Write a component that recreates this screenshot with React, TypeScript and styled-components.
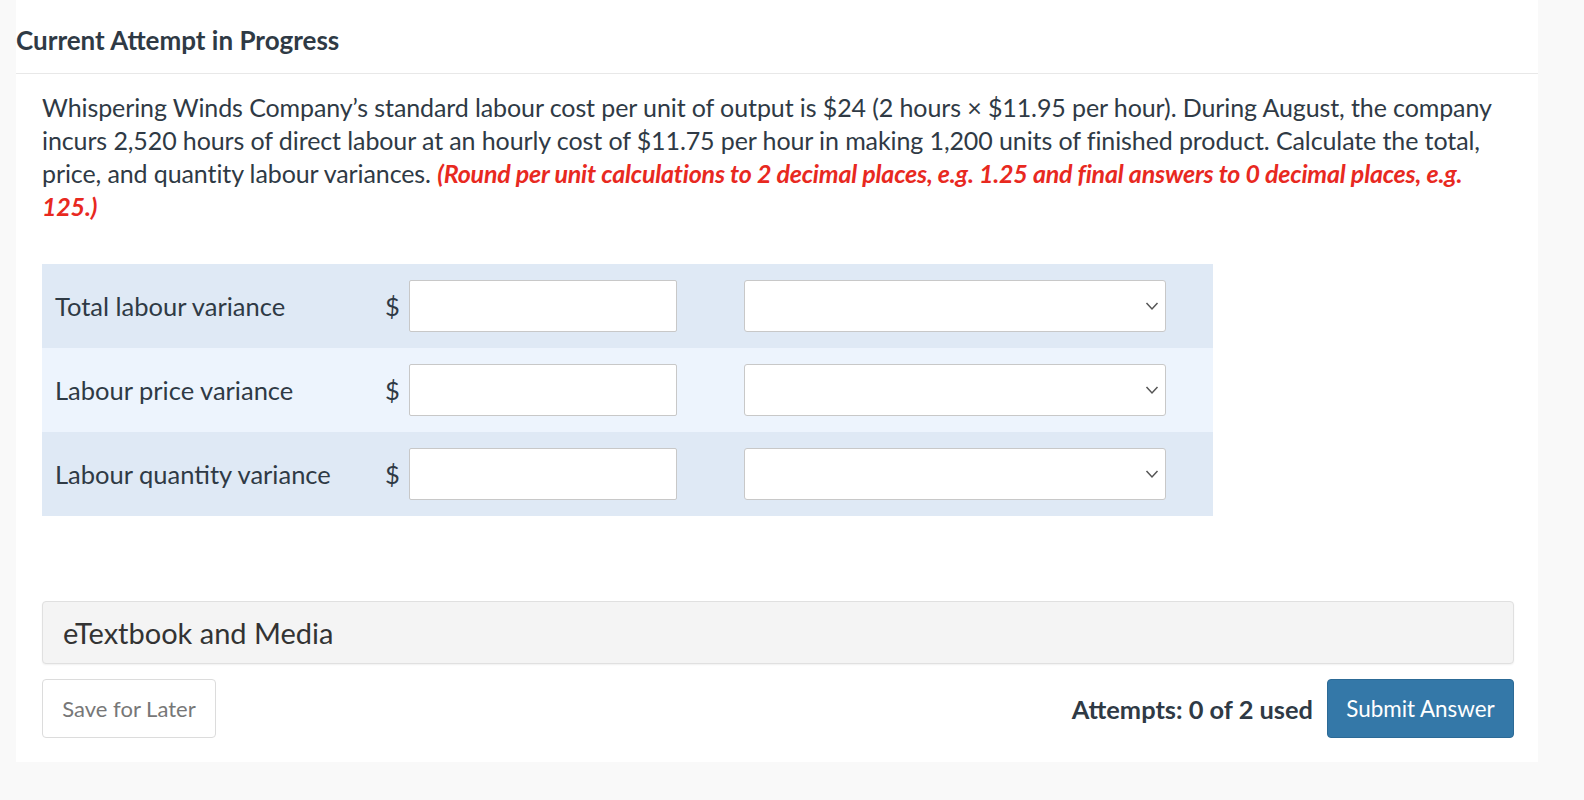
import React from 'react';
import styled, { createGlobalStyle } from 'styled-components';

const GlobalStyle = createGlobalStyle`
  html, body {
    margin: 0;
    padding: 0;
    background: #f9f9f9;
    font-family: Lato, "Open Sans", sans-serif;
  }
`;

const Page = styled.div`
  width: 1584px;
  height: 800px;
  background: #f9f9f9;
  padding-left: 16px;
  box-sizing: border-box;
`;

const Card = styled.div`
  width: 1522px;
  height: 762px;
  background: #fff;
  box-sizing: border-box;
`;

const Heading = styled.h2`
  margin: 0;
  height: 74px;
  display: flex;
  align-items: center;
  padding-top: 6px;
  box-sizing: border-box;
  font-size: 26px;
  font-weight: 700;
  color: #2f3a45;
  border-bottom: 1px solid #e8e8e8;
`;

const Body = styled.div`
  padding: 17px 24px 0 26px;
`;

const Question = styled.p`
  margin: 0;
  font-size: 25px;
  letter-spacing: -0.1px;
  line-height: 33px;
  color: #2f3a45;
`;

const Hint = styled.span`
  color: #e8291f;
  font-weight: 700;
  font-style: italic;
  letter-spacing: -0.2px;
`;

const Table = styled.div`
  margin-top: 41px;
  width: 1171px;
`;

const Row = styled.div<{ $alt?: boolean }>`
  height: 84px;
  display: flex;
  align-items: center;
  background: ${(p) => (p.$alt ? '#edf4fd' : '#dfe9f5')};
`;

const Label = styled.div`
  width: 330px;
  padding-left: 13px;
  font-size: 25.5px;
  color: #2f3a45;
`;

const Dollar = styled.span`
  width: 24px;
  font-size: 25.5px;
  color: #2f3a45;
`;

const TextInput = styled.input`
  width: 268px;
  height: 52px;
  box-sizing: border-box;
  border: 1px solid #c8c8c8;
  border-radius: 2px;
  background: #fff;
  outline: none;
  font-family: inherit;
  font-size: 22px;
`;

const SelectBox = styled.div`
  margin-left: 67px;
  width: 422px;
  height: 52px;
  box-sizing: border-box;
  border: 1px solid #c8c8c8;
  border-radius: 3px;
  background: #fff;
  display: flex;
  align-items: center;
  justify-content: flex-end;
  padding-right: 6px;
`;

const MediaBar = styled.div`
  margin-top: 85px;
  height: 63px;
  box-sizing: border-box;
  background: #f4f4f4;
  border: 1px solid #e0e0e0;
  border-radius: 4px;
  box-shadow: 0 1px 2px rgba(0, 0, 0, 0.06);
  display: flex;
  align-items: center;
  padding-left: 20px;
  font-size: 29px;
  color: #333;
`;

const Footer = styled.div`
  margin-top: 15px;
  display: flex;
  align-items: center;
`;

const SaveButton = styled.button`
  width: 174px;
  height: 59px;
  background: #fff;
  border: 1px solid #dcdcdc;
  border-radius: 4px;
  font-family: inherit;
  font-size: 22px;
  color: #777;
`;

const Attempts = styled.span`
  margin-left: auto;
  margin-right: 14px;
  font-size: 25.4px;
  font-weight: 700;
  color: #2f3a45;
`;

const SubmitButton = styled.button`
  width: 187px;
  height: 59px;
  background: #3478a8;
  border: 1px solid #2c6a96;
  border-radius: 4px;
  font-family: inherit;
  font-size: 22.4px;
  color: #fff;
`;

const Chevron = () => (
  <svg width="14" height="10" viewBox="0 0 14 10">
    <path d="M1.5 2 L7 8 L12.5 2" fill="none" stroke="#555" strokeWidth="1.5" />
  </svg>
);

const rows = ['Total labour variance', 'Labour price variance', 'Labour quantity variance'];

export default function App() {
  return (
    <Page>
      <GlobalStyle />
      <Card>
        <Heading>Current Attempt in Progress</Heading>
        <Body>
          <Question>
            Whispering Winds Company’s standard labour cost per unit of output is $24 (2 hours × $11.95 per hour).
            During August, the company incurs 2,520 hours of direct labour at an hourly cost of $11.75 per hour in
            making 1,200 units of finished product. Calculate the total, price, and quantity labour variances.{' '}
            <Hint>
              (Round per unit calculations to 2 decimal places, e.g. 1.25 and final answers to 0 decimal places, e.g.
              125.)
            </Hint>
          </Question>
          <Table>
            {rows.map((r, i) => (
              <Row key={r} $alt={i === 1}>
                <Label>{r}</Label>
                <Dollar>$</Dollar>
                <TextInput />
                <SelectBox>
                  <Chevron />
                </SelectBox>
              </Row>
            ))}
          </Table>
          <MediaBar>eTextbook and Media</MediaBar>
          <Footer>
            <SaveButton>Save for Later</SaveButton>
            <Attempts>Attempts: 0 of 2 used</Attempts>
            <SubmitButton>Submit Answer</SubmitButton>
          </Footer>
        </Body>
      </Card>
    </Page>
  );
}
